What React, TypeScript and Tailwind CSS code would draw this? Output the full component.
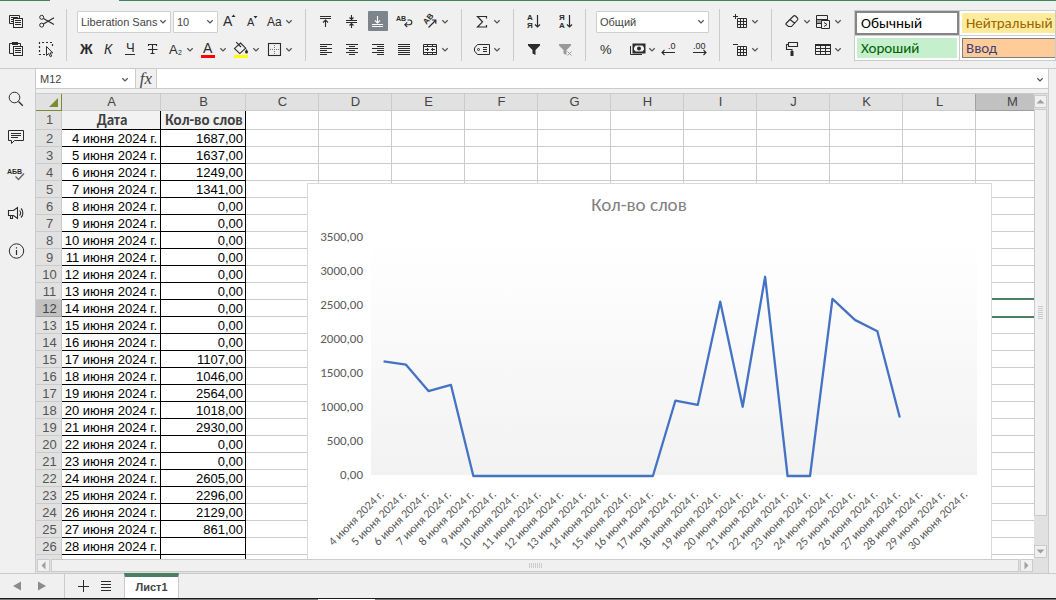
import type { ReactNode } from "react";

const LINE = "#2b2b2b";

function Icon({ children }: { children: ReactNode }) {
  return (
    <svg width="20" height="20" viewBox="0 0 20 20" fill="none" stroke={LINE} strokeWidth="1" className="block shrink-0" aria-hidden="true">
      {children}
    </svg>
  );
}

function Chevron() {
  return (
    <svg width="10" height="20" viewBox="0 0 10 20" fill="none" stroke="#555555" strokeWidth="1.3" className="block shrink-0" aria-hidden="true">
      <path d="M2.3 9.3 5 11.9 7.7 9.3" />
    </svg>
  );
}

function Tool({ label, menu = false, active = false, children }: { label: string; menu?: boolean; active?: boolean; children: ReactNode }) {
  return (
    <button type="button" aria-label={label} className={active ? "flex h-5 shrink-0 rounded-[1px] bg-[#7d858c]" : "flex h-5 shrink-0"}>
      <Icon>{children}</Icon>
      {menu && <Chevron />}
    </button>
  );
}

function Glyph({ x, y, size, bold = false, children }: { x: number; y: number; size: number; bold?: boolean; children: string }) {
  return (
    <text x={x} y={y} fontSize={size} fontWeight={bold ? 700 : 400} fill={LINE} stroke="none">
      {children}
    </text>
  );
}

function Combo({ label, value, width }: { label: string; value: string; width: string }) {
  return (
    <div className={`relative h-[22px] shrink-0 ${width}`}>
      <select aria-label={label} className="block h-full w-full appearance-none rounded-[1px] border border-[#cfcfcf] bg-white pl-[3px] text-[11px] text-[#444444]">
        <option>{value}</option>
      </select>
      <span className="pointer-events-none absolute top-0 right-[3px]">
        <Chevron />
      </span>
    </div>
  );
}

function Group({ top, bottom, className }: { top: ReactNode; bottom: ReactNode; className: string }) {
  return (
    <div className={`flex shrink-0 flex-col gap-1.5 pt-[10px] ${className}`}>
      <div className="flex h-[22px] items-start justify-between">{top}</div>
      <div className="flex h-5 items-start justify-between">{bottom}</div>
    </div>
  );
}

function Separator() {
  return <div className="mt-2 h-[52px] w-px shrink-0 bg-[#cbcbcb]" />;
}

const frontSheet = (
  <>
    <rect x="7.5" y="7.5" width="9" height="9" fill="#f0f0f0" />
    <path d="M9 9.5h6M9 11.5h6M9 13.5h6" />
  </>
);

const gridGlyph = (
  <path d="M7.5 7.5h9v9h-9zM10.5 7v10M13.5 7v10M7 10.5h10M7 13.5h10" />
);

const styleFill = "flex h-full items-center pl-1";

function Toolbar() {
  return (
    <div className="flex h-[68px] shrink-0 overflow-hidden border-b border-[#cbcbcb] bg-[#f0f0f0]">
      <Group
        className="w-[66px] pl-1.5"
        top={
          <div className="flex gap-[10px]">
            <Tool label="Копировать">
              <path d="M7 12.5H3.5v-8h10V7M5 6.5h7M5 8.5h2M5 10.5h2" />
              {frontSheet}
            </Tool>
            <Tool label="Вырезать">
              <circle cx="5.7" cy="6.3" r="2" />
              <circle cx="5.7" cy="14.1" r="2" />
              <path d="M7.4 7.5 18 13.5M7.4 12.9 18 6.7" strokeWidth="1.2" />
            </Tool>
          </div>
        }
        bottom={
          <div className="flex gap-[10px]">
            <Tool label="Вставить">
              <path d="M7 14.5H3.5v-10h11V7" />
              <path d="M6 3h6v3H6z" fill={LINE} stroke="none" />
              {frontSheet}
            </Tool>
            <Tool label="Выделить всё">
              <path d="M9 15.5H3.5v-12h13V8" strokeDasharray="2 2" strokeWidth="1.2" />
              <path d="M10.5 7.5v9l2.2-2 1.6 3.3 1.4-.7-1.6-3.2h2.7z" fill="#f0f0f0" />
            </Tool>
          </div>
        }
      />
      <Separator />
      <Group
        className="w-[238px] pr-[11px] pl-[10px]"
        top={
          <>
            <div className="flex gap-0.5">
              <Combo label="Шрифт" value="Liberation Sans" width="w-[94px]" />
              <Combo label="Размер шрифта" value="10" width="w-[45px]" />
            </div>
            <div className="flex gap-0.5">
              <Tool label="Увеличить шрифт">
                <Glyph x={3} y={15} size={14}>A</Glyph>
                <path d="M11.5 6 13.5 3.5 15.5 6z" fill={LINE} stroke="none" />
              </Tool>
              <Tool label="Уменьшить шрифт">
                <Glyph x={5} y={15} size={11}>A</Glyph>
                <path d="M11.5 5 13.5 7.5 15.5 5z" fill={LINE} stroke="none" />
              </Tool>
              <Tool label="Изменить регистр" menu>
                <Glyph x={3} y={15} size={12}>Aa</Glyph>
              </Tool>
            </div>
          </>
        }
        bottom={
          <>
            <div className="flex gap-0.5">
              <Tool label="Полужирный"><Glyph x={3} y={15} size={14} bold>Ж</Glyph></Tool>
              <Tool label="Курсив">
                <text x="5" y="15" fontSize="14" fontStyle="italic" fill={LINE} stroke="none">К</text>
              </Tool>
              <Tool label="Подчёркнутый">
                <Glyph x={5} y={13} size={13}>Ч</Glyph>
                <path d="M4 15.5h10" />
              </Tool>
              <Tool label="Зачёркнутый">
                <path d="M5.5 7V5.5h8V7M9.5 5.5v9M7.5 14.5h4M5 10.5h9.5" strokeWidth="1.1" />
              </Tool>
            </div>
            <div className="flex gap-[3px]">
              <Tool label="Подстрочные знаки" menu>
                <Glyph x={4} y={15} size={13}>A</Glyph>
                <Glyph x={13} y={16} size={7}>2</Glyph>
              </Tool>
              <Tool label="Цвет шрифта" menu>
                <Glyph x={5} y={14} size={14}>A</Glyph>
                <path d="M3 16h14v3H3z" fill="#ff0000" stroke="none" />
              </Tool>
              <Tool label="Цвет заливки" menu>
                <path d="M3 16h14v3H3z" fill="#ffff00" stroke="none" />
                <path d="M9.5 4 14.7 9.2 8.8 14.6 3.5 9.4zM5.2 3.2 10 8" strokeWidth="1.1" />
                <path d="M15.5 10c1.2 1.8 1.5 2.3 1.5 3a1.5 1.5 0 0 1-3 0c0-.7.3-1.2 1.5-3z" fill={LINE} stroke="none" />
              </Tool>
              <Tool label="Границы" menu>
                <rect x="4.5" y="4.5" width="12" height="12" strokeWidth="1.1" />
                <path d="M10.5 6v9M6 10.5h9" strokeDasharray="1 1" stroke="#777777" />
              </Tool>
            </div>
          </>
        }
      />
      <Separator />
      <Group
        className="w-[155px] pl-[10px]"
        top={
          <div className="flex gap-1.5">
            <Tool label="По верхнему краю">
              <path d="M4 5.5h11M4 7.5h11M9.5 16V9M7 11.5 9.5 9 12 11.5" strokeWidth="1.1" />
            </Tool>
            <Tool label="По середине">
              <path d="M4 9.5h11M4 11.5h11M9.5 4v4.5M7.5 6.5l2 2 2-2M9.5 17v-4.5M7.5 14.5l2-2 2 2" strokeWidth="1.1" />
            </Tool>
            <Tool label="По нижнему краю" active>
              <path d="M4 13.5h11M4 15.5h11M9.5 5v7M7 9.5l2.5 2.5 2.5-2.5" stroke="#ffffff" strokeWidth="1.1" />
            </Tool>
            <Tool label="Перенос текста">
              <Glyph x={2} y={10} size={7} bold>AB</Glyph>
              <path d="M13.5 9h2a2.200 2.200 0 0 1 0 4.700H11M13.200 11.300 10.800 13.700l2.400 2.400" strokeWidth="1.1" />
            </Tool>
            <Tool label="Ориентация" menu>
              <text x="0" y="0" fontSize="8" fontWeight="700" fill={LINE} stroke="none" transform="translate(6.500 14) rotate(-50)">AB</text>
              <path d="M8.500 16.500 15.500 9.500M12 9h3.800v3.800" strokeWidth="1.200" />
            </Tool>
          </div>
        }
        bottom={
          <div className="flex gap-1.5">
            <Tool label="По левому краю">
              <path d="M4 5.5h12M4 7.5h7M4 9.5h12M4 11.5h7M4 13.5h12M4 15.5h7" />
            </Tool>
            <Tool label="По центру">
              <path d="M4 5.5h12M7 7.5h6M4 9.5h12M7 11.5h6M4 13.5h12M7 15.5h6" />
            </Tool>
            <Tool label="По правому краю">
              <path d="M4 5.5h12M9 7.5h7M4 9.5h12M9 11.5h7M4 13.5h12M9 15.5h7" />
            </Tool>
            <Tool label="По ширине">
              <path d="M4 5.5h12M4 7.5h12M4 9.5h12M4 11.5h12M4 13.5h12M4 15.5h12" />
            </Tool>
            <Tool label="Объединить ячейки" menu>
              <path d="M3.5 5.5h13v10h-13zM3 7.5h14M3 13.5h14M7.5 5v3M12.5 5v3M7.5 13v3M12.5 13v3M5 10.5h4M7.5 9v3M15 10.5h-4M12.5 9v3" />
            </Tool>
          </div>
        }
      />
      <Separator />
      <Group
        className="w-[51px] pl-[10px]"
        top={
          <Tool label="Автосумма" menu>
            <path d="M14.5 7.5v-2h-9l5 5.300-5 5.200h9v-2" strokeWidth="1.2" />
          </Tool>
        }
        bottom={
          <Tool label="Именованные диапазоны" menu>
            <path d="M5.5 5.5h12v10h-12l-3-3.500v-3zM11 8.500h4M11 10.500h4M11 12.500h4" />
            <circle cx="6.500" cy="10.500" r="1" />
          </Tool>
        }
      />
      <Separator />
      <Group
        className="w-[71px] pl-[9px]"
        top={
          <div className="flex gap-3">
            <Tool label="Сортировка по возрастанию">
              <Glyph x={4} y={9} size={8} bold>A</Glyph>
              <Glyph x={4} y={17} size={8} bold>Я</Glyph>
              <path d="M14.5 4v12M12 13.5l2.500 2.500 2.500-2.500" strokeWidth="1.2" />
            </Tool>
            <Tool label="Сортировка по убыванию">
              <Glyph x={4} y={9} size={8} bold>Я</Glyph>
              <Glyph x={4} y={17} size={8} bold>A</Glyph>
              <path d="M14.5 4v12M12 13.5l2.500 2.500 2.500-2.500" strokeWidth="1.2" />
            </Tool>
          </div>
        }
        bottom={
          <div className="flex gap-3">
            <Tool label="Фильтр">
              <path d="M5 5h12v1.500l-4.500 4.500v5l-3-1.500V11L5 6.500z" fill={LINE} stroke="none" />
            </Tool>
            <Tool label="Очистить фильтр">
              <path d="M4 5h12v1.500l-4.500 4.500v5l-3-1.500V11L4 6.500z" fill="#999999" stroke="none" />
              <path d="M12.5 12.500l4 4M16.500 12.500l-4 4" stroke="#999999" />
            </Tool>
          </div>
        }
      />
      <Separator />
      <Group
        className="w-[133px] pr-[10px] pl-[10px]"
        top={<Combo label="Числовой формат" value="Общий" width="w-[113px]" />}
        bottom={
          <>
            <Tool label="Процентный формат"><Glyph x={4} y={15} size={13}>%</Glyph></Tool>
            <div className="flex gap-0.5">
              <Tool label="Финансовый формат" menu>
                <path d="M6.500 5.500h11v8h-11z" fill={LINE} strokeWidth="2" />
                <path d="M7 8.500 8.500 6.500h7L17 8.500v2l-1.500 2h-7L7 10.500z" fill="#f0f0f0" stroke="none" />
                <circle cx="12" cy="9.500" r="2" fill={LINE} stroke="none" />
                <path d="M3.500 7v8.500H15" />
              </Tool>
              <Tool label="Уменьшить разрядность">
                <Glyph x={9} y={10} size={9}>.0</Glyph>
                <path d="M3 13.500h13M5.500 11 3 13.500 5.500 16" strokeWidth="1.1" />
              </Tool>
            </div>
            <Tool label="Увеличить разрядность">
              <Glyph x={4} y={10} size={9}>.00</Glyph>
              <path d="M4 13.500h13M14.500 11l2.500 2.500-2.500 2.500" strokeWidth="1.1" />
            </Tool>
          </>
        }
      />
      <Separator />
      <Group
        className="w-[51px] pl-[10px]"
        top={<Tool label="Вставить ячейки" menu>{gridGlyph}<path d="M3 5.500h5M5.500 3v5" /></Tool>}
        bottom={<Tool label="Удалить ячейки" menu>{gridGlyph}<path d="M3 5.500h5" /></Tool>}
      />
      <Separator />
      <Group
        className="w-[82px] pl-[10px]"
        top={
          <div className="flex gap-px">
            <Tool label="Очистить" menu>
              <path d="M4 12.500 11.500 5a1.500 1.500 0 0 1 2 0l2 2a1.500 1.500 0 0 1 0 2L9.500 15.500H6.500L4 13.500zM8 8.500l5 4" strokeWidth="1.1" />
            </Tool>
            <Tool label="Условное форматирование" menu>
              <path d="M3.500 4.500h11v12h-11z" />
              <path d="M3 8h12v1H3zM3 12h6v1H3z" fill={LINE} stroke="none" />
              <path d="M4 9h5v3H4z" fill="#999999" stroke="none" />
              <path d="M8.500 9.500h8v8h-8z" fill="#f0f0f0" />
              <path d="M11 11.500l3 2-3 2" />
            </Tool>
          </div>
        }
        bottom={
          <div className="flex gap-[11px]">
            <Tool label="Формат по образцу">
              <path d="M6.500 3.500h9v4h-9zM6.500 5.500h-2v5h5.500v3" strokeWidth="1.1" />
              <path d="M8.500 12h3v5h-3z" fill={LINE} stroke="none" />
            </Tool>
            <Tool label="Форматировать как таблицу" menu>
              <path d="M2.500 5.500h15v10h-15zM7.500 5v11M12.500 5v11M2 9.500h16M2 12.500h16" />
              <path d="M2 5h16v2H2z" fill={LINE} stroke="none" />
            </Tool>
          </div>
        }
      />
      <div className="mt-[9px] grid h-[51px] min-w-0 flex-1 grid-cols-[105px_105px] grid-rows-[25px_24px] overflow-hidden border border-[#cbcbcb] bg-white font-['Carlito','Lato',sans-serif] text-[15px] leading-4">
        <button type="button" className="border-r border-b border-[#cbcbcb] text-left text-black">
          <span className="flex h-full items-center border-2 border-[#858585] pl-1">Обычный</span>
        </button>
        <button type="button" className="border-r border-b border-[#cbcbcb] p-0.5 text-left text-[#9c6500]">
          <span className={`${styleFill} bg-[#ffeb9c]`}>Нейтральный</span>
        </button>
        <button type="button" className="border-r border-[#cbcbcb] p-0.5 text-left text-[#006100]">
          <span className={`${styleFill} bg-[#c6efce]`}>Хороший</span>
        </button>
        <button type="button" className="border-r border-[#cbcbcb] p-0.5 text-left text-[#3f3f76]">
          <span className="flex h-full items-center border border-[#7f7f7f] bg-[#ffcc99] pl-[3px]">Ввод</span>
        </button>
      </div>
    </div>
  );
}

function Sidebar() {
  return (
    <nav className="flex w-[35px] shrink-0 flex-col gap-[18px] bg-[#f0f0f0] pt-5 pl-1.5">
      <Tool label="Поиск">
        <circle cx="8.500" cy="8.500" r="5.300" />
        <path d="M12.500 12.500l4.300 4.300" strokeWidth="1.300" />
      </Tool>
      <Tool label="Комментарии">
        <path d="M2.500 3.500h15v10h-9l-3 3v-3h-3z" />
        <path d="M5 6.500h10M5 8.500h10M5 10.500h7" />
      </Tool>
      <Tool label="Проверка орфографии">
        <Glyph x={1} y={9} size={7} bold>АБВ</Glyph>
        <path d="M9.500 11.500l3 3 5.500-6" strokeWidth="1.400" stroke="#666666" />
      </Tool>
      <Tool label="Обратная связь">
        <path d="M2.500 7.500h5l4-3v11l-4-3h-5zM4.500 12.500v3h2v-3M13.500 7.500c1.300 1.400 1.300 3.600 0 5M15 5.500c2.500 2.300 2.500 6.700 0 9" strokeWidth="1.1" />
      </Tool>
      <Tool label="О программе">
        <circle cx="10.500" cy="10" r="7.200" />
        <path d="M10.500 9v5M10.500 6.200v1.300" strokeWidth="1.200" />
      </Tool>
    </nav>
  );
}

const START_DAY = 4;
const counts = [1687, 1637, 1249, 1341, 0, 0, 0, 0, 0, 0, 0, 0, 0, 1107, 1046, 2564, 1018, 2930, 0, 0, 2605, 2296, 2129, 861];
const dayLabel = (i: number) => `${START_DAY + i} июня 2024 г.`;
const decimal = (n: number) => `${n},00`;

const columns = ["A", "B", "C", "D", "E", "F", "G", "H", "I", "J", "K", "L", "M"];
const emptyColumns = columns.slice(2);
const rowNumbers = Array.from({ length: 26 }, (_, i) => i + 2);
const ACTIVE_ROW = 12;

function Sheet() {
  return (
    <table className="w-[1013px] table-fixed border-separate border-spacing-0 text-[13px] leading-[14px]">
      <colgroup>
        <col className="w-[26px]" />
        <col className="w-[99px]" />
        <col className="w-[85px]" />
        {emptyColumns.map((c) => (
          <col key={c} className="w-[73px]" />
        ))}
      </colgroup>
      <thead>
        <tr className="leading-4">
          <th className="border-r border-b border-[#7d8a2e] bg-[#e1e1e1] p-0" aria-label="Выделить всё">
            <svg width="25" height="16" viewBox="0 0 25 16" className="block" aria-hidden="true">
              <path d="M13 13 22 4v9z" fill="#7d8a2e" />
            </svg>
          </th>
          {columns.map((c) => (
            <th
              key={c}
              className={
                c === "M"
                  ? "border-r border-b border-[#a0a0a0] bg-[#c1c1c1] p-0 pl-px font-normal text-[#444444]"
                  : c === "L"
                    ? "border-r border-b border-r-[#a0a0a0] border-b-[#cbcbcb] bg-[#e1e1e1] p-0 pl-px font-normal text-[#444444]"
                    : "border-r border-b border-[#cbcbcb] bg-[#e1e1e1] p-0 pl-px font-normal text-[#444444]"
              }
            >
              {c}
            </th>
          ))}
        </tr>
      </thead>
      <tbody>
        <tr className="leading-[18px]">
          <th className="border-r border-b border-[#cbcbcb] bg-[#e1e1e1] p-0 pl-0.5 font-normal text-[#555555]">1</th>
          <th className="overflow-hidden border-r border-b border-black bg-[#f2f2f2] p-0 pl-0.5 font-['Carlito','Lato',sans-serif] text-[15px] whitespace-nowrap text-[#3f3f3f]">Дата</th>
          <th className="overflow-hidden border-r border-b border-black bg-[#f2f2f2] p-0 pl-0.5 font-['Carlito','Lato',sans-serif] text-[15px] whitespace-nowrap text-[#3f3f3f]">Кол-во слов</th>
          {emptyColumns.map((c) => (
            <td key={c} className="border-r border-b border-[#cbcbcb] p-0" />
          ))}
        </tr>
        {rowNumbers.map((n) => {
          const i = n - 2;
          const last = n === 27;
          return (
            <tr key={n} className="h-[17px]">
              <th className={n === ACTIVE_ROW ? "border-r border-b border-[#a0a0a0] bg-[#c1c1c1] p-0 pt-0.5 pl-0.5 font-normal text-[#444444]" : "border-r border-b border-[#cbcbcb] bg-[#e1e1e1] p-0 pt-0.5 pl-0.5 font-normal text-[#555555]"}>
                {last ? "" : n}
              </th>
              <td className="border-r border-b border-black p-0 pt-0.5 pr-[3px] text-right whitespace-nowrap text-black">{last ? "" : dayLabel(i)}</td>
              <td className="border-r border-b border-black p-0 pt-0.5 pr-0.5 text-right text-black">{i < counts.length ? decimal(counts[i]) : ""}</td>
              {emptyColumns.map((c) => (
                <td key={c} className="relative border-r border-b border-[#cbcbcb] p-0">
                  {c === "M" && n === ACTIVE_ROW && <span className="absolute -top-0.5 -left-0.5 h-5 w-[76px] border-2 border-[#4a7f62]" />}
                </td>
              ))}
            </tr>
          );
        })}
      </tbody>
    </table>
  );
}

const PLOT = { left: 64, right: 670, top: 55, base: 293, max: 3500, slots: 27 };
const slotWidth = (PLOT.right - PLOT.left) / PLOT.slots;
const slotX = (i: number) => PLOT.left + slotWidth * (i + 0.56);
const valueY = (v: number) => PLOT.base - ((PLOT.base - PLOT.top) * v) / PLOT.max;
const ticks = [0, 500, 1000, 1500, 2000, 2500, 3000, 3500];

function Chart() {
  return (
    <svg width="685" height="400" viewBox="0 0 685 400" className="absolute top-[90px] left-[271px] block font-['Carlito','Lato',sans-serif]" role="img" aria-label="Кол-во слов">
      <defs>
        <linearGradient id="plotFill" x1="0" y1="0" x2="0" y2="1">
          <stop offset="0" stopColor="#ffffff" />
          <stop offset="1" stopColor="#f2f2f2" />
        </linearGradient>
      </defs>
      <rect x="0.5" y="0.5" width="684" height="399" fill="#ffffff" stroke="#d9d9d9" />
      <rect x={PLOT.left} y="54" width={PLOT.right - PLOT.left} height="238" fill="url(#plotFill)" />
      <text x="332" y="28" textAnchor="middle" fontSize="19" fill="#808080">Кол-во слов</text>
      {ticks.map((t) => (
        <text key={t} x="56" y={valueY(t) + 3} textAnchor="end" fontSize="13" fill="#595959">
          {decimal(t)}
        </text>
      ))}
      {Array.from({ length: PLOT.slots }, (_, i) => (
        <text key={i} textAnchor="end" fontSize="12" fill="#595959" transform={`translate(${slotX(i) + 1} 312) rotate(-45)`}>
          {dayLabel(i)}
        </text>
      ))}
      <polyline
        points={counts.map((v, i) => `${slotX(i)},${valueY(v)}`).join(" ")}
        fill="none"
        stroke="#4472c4"
        strokeWidth="2.3"
        strokeLinejoin="round"
      />
    </svg>
  );
}

function ScrollButton({ label, d }: { label: string; d: string }) {
  return (
    <button type="button" aria-label={label} className="flex h-[13px] w-[13px] shrink-0 items-center justify-center border border-[#cbcbcb] bg-[#f0f0f0]">
      <svg width="9" height="9" viewBox="0 0 9 9" className="block" aria-hidden="true">
        <path d={d} fill="#a0a0a0" />
      </svg>
    </button>
  );
}

function StatusBar() {
  return (
    <footer className="shrink-0 bg-[#f0f0f0]">
      <div className="flex h-[25px] border-t border-[#cbcbcb]">
        <div className="flex w-[64px] shrink-0 items-center gap-[5px] pl-[7px]">
          <button type="button" aria-label="Предыдущий лист">
            <Icon><path d="M14 5.500v9L6 10z" fill="#8b8b8b" stroke="none" /></Icon>
          </button>
          <button type="button" aria-label="Следующий лист">
            <Icon><path d="M6 5.500v9L14 10z" fill="#8b8b8b" stroke="none" /></Icon>
          </button>
        </div>
        <div className="flex w-[60px] shrink-0 items-center gap-[3px] border-l border-[#cbcbcb] pl-2">
          <button type="button" aria-label="Добавить лист">
            <Icon><path d="M10.500 4v12M5 10.500h11" /></Icon>
          </button>
          <button type="button" aria-label="Список листов">
            <Icon><path d="M5 5.500h10M5 8.500h10M5 11.500h10M5 14.500h10" /></Icon>
          </button>
        </div>
        <button type="button" className="-mt-px w-[55px] shrink-0 border-t-4 border-r border-l border-t-[#4a7f62] border-r-[#cbcbcb] border-l-[#cbcbcb] bg-white text-[11px] font-bold text-[#444444]">
          Лист1
        </button>
      </div>
      <div className="h-px bg-[#1c1c1c]" />
      <div className="flex h-px bg-[#75787b]">
        <div className="ml-[318px] w-[57px] bg-white" />
      </div>
    </footer>
  );
}

export default function App() {
  return (
    <div className="flex h-screen flex-col overflow-hidden bg-[#f0f0f0] font-['Liberation_Sans',Arial,sans-serif] text-[#444444]">
      <div className="flex h-px shrink-0">
        <div className="w-[50px] bg-[#40865c]" />
        <div className="w-[69px]" />
        <div className="flex-1 bg-[#40865c]" />
      </div>
      <Toolbar />
      <div className="flex min-h-0 flex-1">
        <Sidebar />
        <main className="flex min-w-0 flex-1 flex-col border-r border-l border-[#cbcbcb]">
          <div className="flex h-5 shrink-0 border-b border-[#cbcbcb] bg-white">
            <div className="relative w-[100px] shrink-0 border-r border-[#cbcbcb]">
              <input aria-label="Имя ячейки" defaultValue="M12" className="block h-full w-full pl-1 text-[11px] text-[#444444]" />
              <span className="pointer-events-none absolute top-0 right-[5px]"><Chevron /></span>
            </div>
            <button type="button" aria-label="Вставить функцию" className="w-[21px] shrink-0 border-r border-[#cbcbcb] bg-[#f0f0f0] font-['Liberation_Serif',serif] text-[17px] leading-[18px] italic">
              fx
            </button>
            <input aria-label="Строка формул" className="min-w-0 flex-1 px-1 text-[11px]" />
            <button type="button" aria-label="Развернуть строку формул" className="pr-[3px]"><Chevron /></button>
          </div>
          <div className="mt-1 flex min-h-0 flex-1 border-t border-[#cbcbcb]">
            <div className="relative min-w-0 flex-1 overflow-hidden bg-white">
              <Sheet />
              <div className="absolute -top-px left-0"><Chart /></div>
            </div>
            <div className="flex w-[14px] shrink-0 flex-col bg-[#e1e1e1] pt-px pb-px">
              <ScrollButton label="Вверх" d="M4.500 2.500 8.500 6.500h-8z" />
              <div className="mt-px flex w-[13px] flex-1 flex-col items-center justify-center gap-px border border-[#cbcbcb] bg-[#f0f0f0]">
                {[0, 1, 2, 3, 4, 5, 6].map((i) => (
                  <span key={i} className="h-px w-[5px] bg-[#cbcbcb]" />
                ))}
              </div>
              <div className="h-[29px] shrink-0" />
              <ScrollButton label="Вниз" d="M4.500 6.500 8.500 2.500h-8z" />
            </div>
          </div>
          <div className="flex h-[14px] shrink-0 bg-[#e1e1e1] pr-[15px] pl-px">
            <ScrollButton label="Влево" d="M2.500 4.500 6.500.5v8z" />
            <div className="mx-px flex h-[13px] flex-1 items-center justify-center gap-px border border-[#cbcbcb] bg-[#f0f0f0]">
              {[0, 1, 2, 3, 4, 5, 6].map((i) => (
                <span key={i} className="h-[5px] w-px bg-[#cbcbcb]" />
              ))}
            </div>
            <ScrollButton label="Вправо" d="M6.500 4.500 2.500.5v8z" />
          </div>
        </main>
        <div className="w-[7px] shrink-0" />
      </div>
      <StatusBar />
    </div>
  );
}
